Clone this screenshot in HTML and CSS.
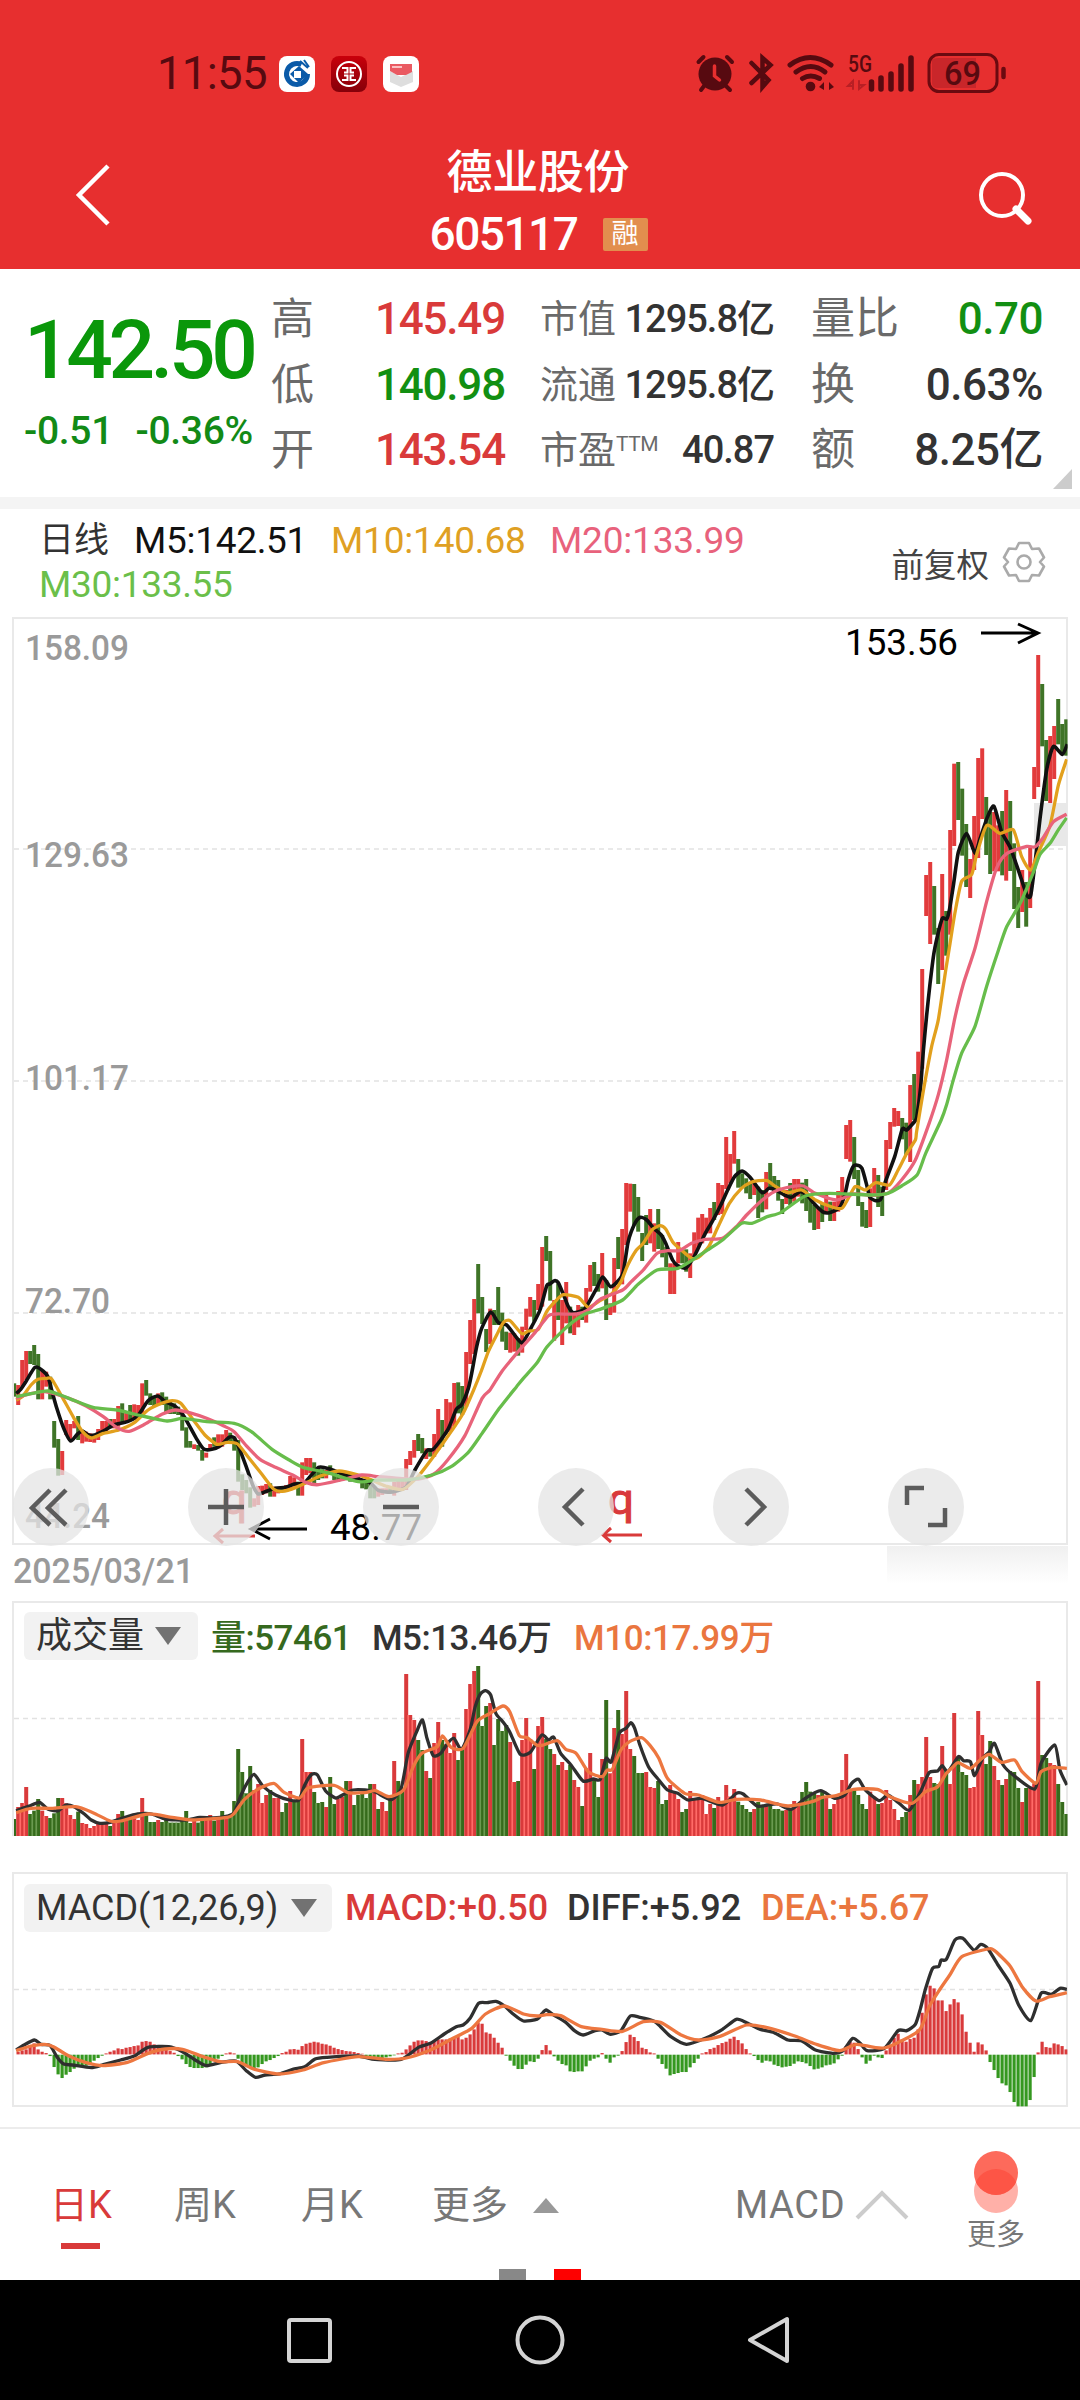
FILE: index.html
```html
<!DOCTYPE html>
<html lang="zh-CN">
<head>
<meta charset="utf-8">
<title>德业股份 605117</title>
<link rel="stylesheet" href="styles.css">
</head>
<body>
<header class="top">
  <div class="status">
    <div class="status-left">
      <span class="clock">11:55</span>
      <svg class="app" viewBox="0 0 36 36"><rect width="36" height="36" rx="8" fill="#fff"/><path d="M22.500 8.500A10.500 10.500 0 1 0 28.500 18" fill="none" stroke="#0a5aa8" stroke-width="5"/><path d="M20 10l9 8-9 9-9-9z" fill="#0a5aa8"/><path d="M15 15h7v7h-7z" fill="#fff"/><path d="M21 5l8 7M25 4l5 7" stroke="#0a5aa8" stroke-width="2"/></svg>
      <svg class="app" viewBox="0 0 36 36"><defs><linearGradient id="rg" x2="0" y2="1"><stop stop-color="#c9000b"/><stop offset="1" stop-color="#850009"/></linearGradient></defs><rect width="36" height="36" rx="8" fill="url(#rg)"/><circle cx="18" cy="18" r="12" fill="none" stroke="#fff" stroke-width="2"/><path d="M11 12h5.500v4.500H13M25 12h-5.500v4.500H23M11 24h5.500v-4.500H13M25 24h-5.500v-4.500H23" fill="none" stroke="#fff" stroke-width="2"/></svg>
      <svg class="app" viewBox="0 0 36 36"><rect width="36" height="36" rx="8" fill="#fff"/><path d="M7 15l11 6 12-6v11l-12 5-11-5z" fill="#dedede"/><path d="M7 8h22v8l-6 3h-9l-7-4z" fill="#ea5a62"/><path d="M9 11h10" stroke="#fbc1c3" stroke-width="2"/></svg>
    </div>
    <svg class="status-icons" viewBox="0 0 340 70">
      <g fill="none" stroke="#570a10" stroke-width="4" stroke-linecap="round">
        <circle cx="35" cy="34" r="16.500" fill="#570a10" stroke="none"/>
        <path d="M24 46l-3 4M46 46l4 4M18.500 22l5-5M52 22l-5-5"/>
        <path d="M34.500 26v10l5 4" stroke="#e72f2f" stroke-width="3.500"/>
        <path d="M71.500 23l17 17-6 7v-29l8 7-19 18" stroke-width="4.500"/>
        <path d="M110 25q20-15 41 0M116 32q15-11 29 0M122.500 38.500q8-5 17 0" stroke-width="5"/>
        <circle cx="130.500" cy="46.500" r="4.800" fill="#570a10" stroke="none"/>
        <path d="M144 42v8l-5-3zM149 42v8l5-3z" fill="#570a10" stroke="none"/>
        <path d="M191.500 42v7M201 38v11M211 34v15M221 26v23M231 18v31" stroke-width="5.500"/>
        <path d="M173 49v-8l-5 5h4M179 41v8l5-4h-4" stroke="#b81f24" stroke-width="2"/>
      </g>
      <path d="M252 20q2-2 6-2h38v30h-38q-6 0-6-5z" fill="#c9262a"/>
      <rect x="249" y="14.500" width="68" height="37" rx="10" fill="none" stroke="#6b0a10" stroke-width="3"/>
      <path d="M323.500 29v8" stroke="#6b0a10" stroke-width="4.500" stroke-linecap="round"/>
      <text x="168" y="31.500" class="sg" textLength="24" lengthAdjust="spacingAndGlyphs">5G</text>
      <text x="264" y="45" class="batt" textLength="37" lengthAdjust="spacingAndGlyphs">69</text>
    </svg>
  </div>
  <div class="titlebar">
    <svg class="back" viewBox="0 0 40 66"><path d="M34 4L5 33l29 29" fill="none" stroke="#fff" stroke-width="4.500"/></svg>
    <div class="title">
      <div class="name">德业股份</div>
      <div class="code"><span>605117</span><b class="badge">融</b></div>
    </div>
    <svg class="search" viewBox="0 0 56 56"><circle cx="25" cy="25" r="21" fill="none" stroke="#fff" stroke-width="4"/><path d="M39 39l12 12" stroke="#fff" stroke-width="7" stroke-linecap="round"/></svg>
  </div>
</header>

<section class="quote">
  <div class="price">
    <div class="now">142.50</div>
    <div class="chg"><span>-0.51</span><span>-0.36%</span></div>
  </div>
  <dl class="col c1"><dt>高</dt><dd class="up">145.49</dd><dt>低</dt><dd class="down">140.98</dd><dt>开</dt><dd class="up">143.54</dd></dl>
  <dl class="col c2"><dt>市值</dt><dd>1295.8亿</dd><dt>流通</dt><dd>1295.8亿</dd><dt>市盈<sup>TTM</sup></dt><dd>40.87</dd></dl>
  <dl class="col c3"><dt>量比</dt><dd class="down">0.70</dd><dt>换</dt><dd>0.63%</dd><dt>额</dt><dd>8.25亿</dd></dl>
  <i class="corner"></i>
</section>

<section class="legend">
  <div class="ma">
    <span class="l0">日线</span><span class="l1">M5:142.51</span><span class="l2">M10:140.68</span><span class="l3">M20:133.99</span><span class="l4">M30:133.55</span>
  </div>
  <div class="adj">前复权
    <svg class="gear" viewBox="-22 -22 44 44"><path d="M-5-19h10l3 6 7-.5 5 9-4 4.500 4 4.500-5 9-7-.5-3 6h-10l-3-6-7 .5-5-9 4-4.500-4-4.500 5-9 7 .5z" fill="none" stroke="#aaa" stroke-width="2.600" stroke-linejoin="round"/><circle r="6.500" fill="none" stroke="#aaa" stroke-width="2.600"/></svg>
  </div>
</section>

<section class="kline">
  <svg class="chart" id="kline" viewBox="0 610 1080 980"></svg>
  <nav class="tools">
    <button><svg viewBox="-38 -38 76 76"><path d="M-1-17L-19 1l18 17M15-17L-3 1l18 17"/></svg></button>
    <button><svg viewBox="-38 -38 76 76"><path d="M-18 0h36M0-18v36"/></svg></button>
    <button><svg viewBox="-38 -38 76 76"><path d="M-18 0h36"/></svg></button>
    <button><svg viewBox="-38 -38 76 76"><path d="M7-18L-11 0 7 18"/></svg></button>
    <button><svg viewBox="-38 -38 76 76"><path d="M-5-18L13 0-5 18"/></svg></button>
    <button><svg viewBox="-38 -38 76 76"><path d="M-2-19h-17v17M2 18h17v-17"/></svg></button>
  </nav>
</section>

<section class="panel vol">
  <div class="head">
    <span class="pick">成交量<i></i></span>
    <span class="v1">量:57461</span><span class="v2">M5:13.46万</span><span class="v3">M10:17.99万</span>
  </div>
  <svg class="chart" id="vol" viewBox="0 1590 1080 270"></svg>
</section>

<section class="panel macd">
  <div class="head">
    <span class="pick">MACD(12,26,9)<i></i></span>
    <span class="m1">MACD:+0.50</span><span class="m2">DIFF:+5.92</span><span class="m3">DEA:+5.67</span>
  </div>
  <svg class="chart" id="macd" viewBox="0 1860 1080 267"></svg>
</section>

<footer class="tabs">
  <span class="t1 on">日K</span><span class="t2">周K</span><span class="t3">月K</span><span class="t4">更多<i></i></span>
  <span class="t5">MACD<svg viewBox="0 0 54 30"><path d="M2 28L27 3l25 25" fill="none" stroke="#ccc" stroke-width="4"/></svg></span>
  <span class="t6"><svg viewBox="0 0 48 64"><clipPath id="tc"><circle cx="24" cy="22" r="22"/></clipPath><circle cx="24" cy="40" r="22" fill="#ffb0a8"/><circle cx="24" cy="22" r="22" fill="#fd6a5b"/><circle cx="24" cy="40" r="22" fill="#fd5546" clip-path="url(#tc)"/></svg>更多</span>
  <div class="pager"><i></i><i class="cur"></i></div>
</footer>
<nav class="sysnav">
  <svg viewBox="0 0 1080 120"><g fill="none" stroke="#d4d4d4" stroke-width="4" stroke-linejoin="round"><rect x="289" y="40" width="41" height="41" rx="2"/><circle cx="540" cy="60" r="22.500"/><path d="M787 39v42L750 60z"/></g></svg>
</nav>
<script src="chart.js"></script>
</body>
</html>
```
FILE: styles.css
```css
* { box-sizing: border-box; }
body { margin: 0; width: 1080px; height: 2400px; overflow: hidden; background: #fff; font-family: Roboto, "Noto Sans CJK SC", sans-serif; color: #333; }
i { font-style: normal; }
.top { height: 269px; background: #e72f2f; color: #fff; }
.status { height: 130px; padding: 40px 60px 0 157px; display: flex; justify-content: space-between; }
.status-left { display: flex; align-items: center; height: 67px; }
.clock { width: 122px; font-size: 45.500px; letter-spacing: -.7px; color: #570a10; }
.app { width: 36px; height: 36px; margin-right: 16px; }
.status-icons { width: 340px; height: 70px; }
.sg { font-size: 24px; font-weight: 500; fill: #570a10; }
.batt { font-size: 34px; font-weight: 500; fill: #570a10; }
.titlebar { display: flex; align-items: flex-start; justify-content: space-between; padding: 0 47px 0 74px; }
.back { width: 40px; height: 66px; margin-top: 32px; }
.search { width: 56px; height: 56px; margin-top: 40px; }
.title { width: 240px; }
.name { height: 78px; padding: 3px 0 0 21px; line-height: 78px; font-size: 46px; font-weight: 500; letter-spacing: -.3px; white-space: nowrap; }
.code { display: flex; align-items: center; height: 52px; padding-left: 4px; font-size: 46px; font-weight: 500; letter-spacing: -1.500px; }
.code span { width: 173px; }
.badge { width: 45px; height: 33px; border-radius: 2px; background: #e28e4e; font-size: 27px; line-height: 32px; font-weight: 400; text-align: center; letter-spacing: 0; }

.quote { position: relative; height: 240px; border-bottom: 12px solid #f4f4f4; display: flex; font-weight: 500; }
.price { width: 271px; color: #0a970a; white-space: nowrap; }
.now { height: 110px; margin-top: 26px; padding-left: 24px; line-height: 110px; font-size: 82px; letter-spacing: -4.400px; }
.chg { display: flex; justify-content: space-between; padding: 1px 18px 0 24px; height: 50px; line-height: 50px; font-size: 39px; letter-spacing: -.3px; color: #128a16; }
.col { margin: 18px 0 0; display: grid; grid-template-columns: auto auto; grid-template-rows: repeat(3, 65.500px); justify-content: space-between; line-height: 65px; white-space: nowrap; }
.col dt { font-weight: 400; color: #6a6a6a; font-size: 43px; }
.col dd { margin: 0; text-align: right; font-size: 44px; letter-spacing: -1.200px; }
.c1 { width: 234px; }
.c2 { width: 234px; margin-left: 35px; grid-template-columns: 80px auto; }
.c2 dt { font-size: 38px; }
.c2 dd { font-size: 38px; letter-spacing: -1px; }
.c2 sup { font-size: 21px; line-height: 0; vertical-align: 12px; letter-spacing: -.5px; }
.c3 { width: 232px; margin-left: 37px; }
.c3 dt { font-size: 44px; }
.c3 dd { letter-spacing: -.5px; }
.up { color: #d93a3a; }
.down { color: #128f12; }
.corner { position: absolute; right: 8px; bottom: 8px; border-left: 19px solid transparent; border-bottom: 20px solid #ccc; }

.legend { height: 101px; padding: 10px 34px 0 39px; display: flex; justify-content: space-between; }
.ma { width: 740px; display: flex; flex-wrap: wrap; align-content: flex-start; font-size: 37px; line-height: 44px; white-space: nowrap; }
.l0 { width: 95px; font-size: 35px; color: #333; }
.l1 { width: 197px; color: #111; letter-spacing: -.3px; }
.l2 { width: 219px; color: #dfa023; letter-spacing: -.2px; }
.l3 { width: 200px; color: #e8627c; letter-spacing: -.2px; }
.l4 { color: #6bbf4a; letter-spacing: -.3px; }
.adj { display: flex; align-items: center; height: 86px; font-size: 32.500px; color: #444; }
.gear { width: 44px; height: 44px; margin-left: 13px; }

.kline { position: relative; height: 980px; }
.chart { display: block; width: 1080px; height: 100%; overflow: visible; }
.chart text { font-size: 37px; }
.chart .ax { fill: #9a9a9a; font-weight: 500; font-size: 35px; }
.chart .q { font-size: 43px; }
.tools { position: absolute; left: 13px; top: 858px; display: flex; gap: 99px; }
.tools button { width: 76px; height: 78px; padding: 0; border: 0; border-radius: 50%; background: rgba(228, 228, 228, .75); }
.tools svg { display: block; width: 76px; height: 76px; }
.tools path { fill: none; stroke: #5c5c5c; stroke-width: 4.500; }

.panel { position: relative; }
.vol { height: 270px; }
.macd { height: 267px; }
.head { position: absolute; left: 24px; display: flex; align-items: center; height: 47px; font-size: 35px; font-weight: 500; white-space: nowrap; }
.vol .head { top: 22px; }
.macd .head { top: 24px; font-size: 36px; }
.pick { display: flex; align-items: center; justify-content: space-between; height: 48px; padding: 0 17px 0 12px; border-radius: 6px; background: #f2f2f2; font-weight: 400; }
.pick i { border: 13.500px solid transparent; border-top: 18px solid #727272; border-bottom: 0; }
.vol .pick { width: 174px; margin-right: 13px; font-size: 36px; line-height: 44px; }
.macd .pick { width: 308px; margin-right: 13px; padding-right: 15px; }
.v1, .v2, .v3 { margin-top: -2px; }
.v1 { width: 161px; color: #36691e; letter-spacing: -.5px; }
.v2 { width: 202px; letter-spacing: -.5px; }
.v3 { color: #ea763f; letter-spacing: -.4px; }
.m1 { width: 222px; color: #d93a3a; }
.m2 { width: 194px; }
.m3 { color: #ea763f; }

.tabs { position: relative; height: 153px; border-top: 2px solid #ececec; padding: 0 0 0 50px; display: flex; font-size: 38px; line-height: 56px; color: #777; white-space: nowrap; }
.tabs > span { margin-top: 48px; }
.t1 { width: 124px; }
.t2 { width: 127px; }
.t3 { width: 131px; }
.t4 { width: 303px; display: flex; align-items: center; height: 56px; }
.t4 i { margin-left: 25px; border: 13.500px solid transparent; border-bottom: 15px solid #999; border-top: 0; }
.t5 { width: 221px; display: flex; align-items: center; height: 56px; letter-spacing: .6px; }
.t5 svg { width: 54px; height: 30px; margin-left: 10px; }
.tabs .t6 { width: 80px; margin-top: 22px; text-align: center; font-size: 29px; line-height: 40px; }
.t6 svg { display: block; width: 48px; height: 64px; margin: 0 auto; }
.on { color: #d93a3a; }
.on::after { content: ""; display: block; width: 39px; height: 6px; margin: 10px 0 0 11px; background: #d93a3a; }
.pager { position: absolute; left: 499px; bottom: 0; display: flex; gap: 28px; }
.pager i { width: 27px; height: 11px; background: #888; }
.pager .cur { background: #fe0000; }
.sysnav { height: 120px; background: #000; }
.sysnav svg { display: block; }
```
FILE: chart.js
```js
const RED = '#e23b3c', GREEN = '#3f7427';
const barX = i => 12.2 + 4 * i;
const nums = s => s.trim().split(/[\s,]+/).map(Number);

// Coordinate frames the series are recorded in: origin and units per pixel.
const F = {
  A: [0, 1280, 2.904, 3], Z: [440, 1210, 3, 3], B: [540, 1080, 2.904, 3], C: [780, 600, 3, 2.24],
  V: [0, 1590, 2.904, 3], W: [540, 1590, 2.904, 3], M: [0, 1860, 2.904, 3], N: [540, 1860, 2.904, 3]
};

function line(color, parts, w) {
  const p = [];
  for (const [f, s] of parts) {
    const [ox, oy, sx, sy] = F[f], n = nums(s);
    for (let k = 0; k < n.length; k += 2) p.push([ox + n[k] / sx, oy + n[k + 1] / sy]);
  }
  let d = `M${p[0]}`;
  for (let k = 0; k < p.length - 1; k++) {
    const a = p[k - 1] || p[k], b = p[k], c = p[k + 1], e = p[k + 2] || c, t = 9;
    d += `C${b[0] + (c[0] - a[0]) / t},${b[1] + (c[1] - a[1]) / t} ${c[0] - (e[0] - b[0]) / t},${c[1] - (e[1] - b[1]) / t} ${c}`;
  }
  return `<path d="${d}" fill="none" stroke="${color}" stroke-width="${w || 3.3}" stroke-linejoin="round"/>`;
}
const rect = (x, y, w, h, c) => `<rect x="${x}" y="${y}" width="${w}" height="${h}" fill="${c}"/>`;
const grid = y => `<path d="M14 ${y}H1066" stroke="#e2e2e2" stroke-width="1.500" stroke-dasharray="5 4"/>`;
const label = (x, y, t, w, c) => `<text x="${x}" y="${y}" class="${c || ''}" textLength="${w}" lengthAdjust="spacingAndGlyphs">${t}</text>`;

const candles = `g310,350 r315,375 r240,320 r213,300 g213,252 g195,255 g222,358 r270,358 r275,320 g290,358
g423,503 g477,587 r513,585 r420,465 r432,478 r423,445 g408,480 r450,490 r455,485 r460,486
r462,488 r447,480 r423,462 r423,455 g417,445 r417,445 r378,440 g370,430 r395,425 g375,420
r373,420 r375,415 r310,400 g300,347 g340,375 g350,378 r340,375 g337,375 g350,400 g365,402
g370,402 g380,405 g390,452 g442,503 g483,503 r493,507 g495,512 g510,542 r518,533 r492,510
g472,500 r463,505 r463,500 r450,490 g458,490 g470,512 g480,605 g583,630 g600,640 g622,683
r655,680 r618,675 r617,645 r612,640 g610,650 r620,650 r622,640 g618,632 r615,635 r588,632
r592,620 g605,647 r547,647 r534,585 r534,580 g547,610 g562,600 g568,595 r570,595 g556,580
g570,600 g585,605 r580,600 r578,597 g580,605 r585,603 g585,605 g598,625 g600,628 g612,655
g620,655 r625,650 r625,645 r625,640 g625,640 r605,647 r600,630 r600,632 r537,630 r513,555
r480,533 g462,513 g474,520 r505,537 g505,530 r462,530 r387,510 g420,500 r357,460 r367,455
r309,440 g307,400 g318,405 r216,380 r120,252 r57,222 g-48,100 g51,132 g147,216 r86,192
g90,135 g21,135 g98,185 g155,210 r158,218 r160,215 g175,227 r140,218 r86,150 r51,110
g60,125 r12,90 r-99,80 g-132,-57 g-87,62 r60,182 g10,120 r60,195 r6,130 g80,160
r95,165 r75,142 g80,120 r24,128 r-45,35 g-54,18 g-18,35 r-81,25 g0,120 r70,105
r-66,98 g-129,-33 r-153,13 r-291,-105 r-289,-205 g-288,-165 g-249,-145 g-141,-57 g-195,-105 r-213,-110
r-170,-85 g-213,-93 g-135,-68 g-100,-38 r-50,42 r-50,42 r-114,-50 g-92,-50 g-92,-25 r-80,-6
r-143,-70 r-187,-95 r-198,-110 r-187,-140 r-216,-140 g-234,-180 r-291,-195 r-285,-198 r-429,-273 r-378,-290
r-447,-349 g-363,-277 g-320,-278 g-305,-260 g-290,-243 r-290,-255 g-280,-186 g-270,-203 r-324,-212 g-351,-270
g-312,-265 g-300,-238 g-243,-198 r-270,-228 g-291,-225 r-303,-235 r-303,-250 g-292,-230 g-303,-207 g-255,-172
g-225,-150 r-220,-153 g-230,-174 r-255,-200 g-235,-177 r-235,-177 r-267,-205 r-309,-220 r-465,-363 r-480,-355
g-429,-303 g-330,-222 g-234,-160 g-210,-156 r-275,-159 r-336,-250 g-315,-219 g-280,-192 r-420,-270 r-474,-393
r-516,-460 r-507,-462 g-486,-422 g-472,-375 r-585,-354 g-618,-480 r-685,-500 r-933,-634 r-1215,-1092 r-1254,-1008
g-1182,-1036 g-1056,-888 r-1218,-930 g-1107,-973 r-1350,-1036 r-1549,-1302 g-1554,-1380 g-1474,-1273 g-1368,-1179 r-1263,-1146
r-1392,-1230 r-1566,-1266 r-1595,-1383 g-1449,-1275 g-1404,-1218 r-1404,-1226 r-1364,-1226 g-1407,-1214 r-1470,-1198 g-1437,-1227
g-1310,-1113 g-1179,-1056 r-1230,-1104 g-1194,-1060 r-1301,-1116 r-1539,-1443 r-1875,-1479 g-1788,-1601 g-1620,-1437 r-1632,-1431
r-1662,-1503 g-1743,-1607 g-1668,-1583 g-1682,-1573`.split(/\s+/);

let k = '<clipPath id="cp"><path d="M14 610H1067.500V2200H14z"/></clipPath>';
k += '<defs><linearGradient id="sh" x2="0" y2="1"><stop stop-color="#f0f0f0"/><stop offset="1" stop-color="#fff"/></linearGradient></defs>';
k += '<rect x="13" y="618" width="1054" height="926" fill="none" stroke="#e9e9e9" stroke-width="2"/>' + grid(849) + grid(1081) + grid(1313);
k += rect(1034, 803, 33, 43, '#e8e8e8') + rect(887, 1546, 181, 38, 'url(#sh)');
k += label(25, 660, '158.09', 104, 'ax') + label(25, 867, '129.63', 104, 'ax') + label(25, 1090, '101.17', 104, 'ax') +
  label(25, 1313, '72.70', 85, 'ax') + label(25, 1528, '44.24', 85, 'ax') + label(13, 1583, '2025/03/21', 181, 'ax');
k += '<g clip-path="url(#cp)">';
candles.forEach((c, i) => {
  const [a, b] = nums(c.slice(1));
  k += rect(barX(i), 1280 + a / 3, 4, (b - a) / 3, c[0] === 'r' ? RED : GREEN);
});
k += line('#111', [
  ['A', '47,340 60,328 75,305 102,262 125,273 140,292 150,330 165,385 185,445 205,483 225,462 240,453 255,464 270,466 300,453 330,435 370,425 400,408 430,362 458,348 480,365 510,380 535,410 570,475 592,507 615,508 640,497 665,472 680,473 695,505 715,560 735,618 750,642 770,635 800,625 830,622 855,612 885,608 925,562 960,568 1000,585 1040,597 1075,608 1100,632 1140,636 1180,620 1205,570 1240,512 1258,508 1300,450 1325,388 1340,375'],
  ['Z', '85,535 95,490 110,410 125,355 152,306 175,338 200,345 230,383 248,398 275,350 300,300 320,228 330,222 343,212 355,218 372,258 385,290 400,308 430,300 445,280 470,235 488,201'],
  ['B', '205,620 232,597 242,575 255,490 265,455 280,422 292,412 310,420 330,445 352,465 365,490 385,540 400,557 425,563 450,525 480,460 500,425 525,375 545,330 565,290 587,273 610,292 645,338 665,325 685,330 710,345 730,352 755,335 775,345 795,370 820,395 840,398 870,383 885,345 895,300 908,262 918,255 935,265 950,320 958,352 975,362 990,357 1003,305 1030,230 1052,148 1065,150 1090,122'],
  ['C', '411,1155 422,1090 430,1010 440,930 450,860 462,790 478,735 488,712 500,715 508,695 520,640 535,565 560,523 585,567 600,535 622,487 642,462 665,520 690,553 715,605 740,660 752,662 765,590 780,490 800,380 820,328 847,346 862,323']], 3.6);
k += line('#e2a01d', [
  ['A', '47,360 65,350 90,315 110,298 135,295 150,297 180,350 215,415 240,455 265,474 300,460 345,450 390,428 430,390 470,370 500,362 525,370 560,418 595,465 630,493 660,487 690,492 720,530 760,582 795,628 820,634 860,622 900,603 930,588 985,573 1040,585 1080,600 1120,618 1170,628 1215,588 1260,528 1310,455 1345,400'],
  ['Z', '103,535 125,480 145,425 170,375 190,338 210,332 245,371 265,363 295,358 320,305 345,275 370,254 415,262 445,292 480,272'],
  ['B', '210,640 235,605 255,555 280,510 300,490 325,450 348,437 365,447 385,485 410,510 440,535 460,532 490,500 515,445 550,370 585,325 610,308 635,302 660,302 685,320 720,338 760,330 800,360 840,378 878,384 915,320 945,330 975,308 1015,315 1040,270 1065,220 1090,180'],
  ['C', '410,1190 430,1100 455,1000 475,940 497,830 510,770 525,700 545,630 575,615 590,570 620,505 660,523 700,515 725,575 752,605 775,565 810,505 835,415 860,357']]);
k += line('#e8637a', [
  ['A', '47,355 80,343 130,335 200,355 250,378 300,410 340,443 375,454 420,433 470,403 510,390 550,398 600,415 650,438 680,455 715,497 755,538 800,562 850,585 890,608 925,614 990,600 1050,585 1100,590 1160,595 1215,597 1260,582 1300,540 1350,467 1400,355'],
  ['Z', '150,540 185,485 230,430 285,368 325,317 350,312 410,312 445,300 480,268'],
  ['B', '240,630 265,605 300,570 340,520 370,512 405,512 440,490 480,478 530,475 570,440 600,405 640,365 680,335 730,320 765,318 800,340 860,360 910,342 960,345 1010,340 1050,300 1090,240 1130,130'],
  ['C', '475,1108 500,1030 525,935 550,860 585,780 620,675 650,600 680,568 740,552 765,553 790,532 820,497 860,480']]);
k += line('#67bd4b', [
  ['A', '47,350 95,340 140,333 200,355 270,382 340,390 400,405 485,423 530,415 600,425 680,430 730,455 790,508 840,540 880,562 950,578 1040,605 1100,600 1180,600 1255,585 1310,560 1360,517 1400,460 1450,385 1500,320'],
  ['Z', '250,505 290,460 320,412 360,370 400,335 440,310 480,298'],
  ['B', '240,660 285,613 340,570 400,565 450,535 490,508 530,480 585,430 615,430 660,410 700,397 770,348 840,340 960,345 1010,340 1050,318 1095,285 1120,220 1165,120'],
  ['C', '500,1130 520,1075 545,1015 585,955 620,865 655,785 680,732 720,680 760,610 780,570 810,545 835,515 860,488']]);
k += '</g><g fill="none" stroke="#000" stroke-width="3"><path d="M981 633h55M1018 624l20 9-20 10"/><path d="M307 1529h-55M270 1519l-19 10 19 10"/></g>';
k += label(845, 655, '153.56', 113) + label(330, 1540, '48.77', 92);
k += '<g fill="none" stroke="#d93a3a" stroke-width="3"><path d="M255 1536h-40M223 1529l-8 7 8 7M642 1535h-39M611 1528l-8 7 8 7"/></g>';
k += '<g fill="#d93a3a" stroke="#d93a3a">' + label(222, 1514, 'q', 25, 'q') + label(608, 1514, 'q', 26, 'q') + '</g>';
document.getElementById('kline').innerHTML = k;

const volume = `g687 r651 r639 r591 g672 g662 g627 r662 r678 g684 g670 g624 r624 r640 r675 r687 g665 r699 r702 r714 r708 r700 r702 r702 g708 r690 r672 g663 r685 g675
r685 r690 r624 g675 g696 g696 r690 g696 g690 g698 g698 g698 g690 g663 g699 r690 g698 g685 r680 r675 g692 r678 g663 r680 g675 g633 g477 g546 g610 g528
r600 r582 r639 r615 g600 r624 r624 g666 g639 r603 g630 g627 r447 r546 r546 g606 g639 g636 r651 g561 g642 r627 r620 g573 r573 g645 g615 g612 g624 g582
r582 g657 r636 r663 g630 r513 g573 g595 r252 r375 r390 g450 g480 r543 g564 r459 r396 g450 r462 r489 r429 g510 g475 r357 r282 r243 g228 g408 g348 r339
g465 g387 g423 g405 r456 r576 g573 r450 r384 r447 g537 r408 r381 g447 g477 r492 g525 r516 r540 g525 r570 r591 g648 r535 r489 g570 g621 r507 g330 r550
r414 g360 r432 r303 r477 g498 g549 g549 r546 r591 r594 g573 g642 g630 r585 r605 r627 g666 g657 r603 r630 r625 r615 r672 r642 g654 r621 r635 r585 r620
r597 g635 g645 g657 g666 r657 g636 g650 r645 g640 g657 g657 g662 r660 g657 r633 r645 g606 g576 g605 g610 r615 g605 r620 g657 r642 r625 r570 r492 r600
g594 g615 g642 g657 r605 r620 g642 r639 r600 r630 r657 r690 g681 g666 r615 g570 r582 r561 r441 r561 g579 g582 r468 g540 r582 r369 g500 g546 g555 r594
r591 r363 r435 g522 g453 r528 r570 g585 r567 g543 g546 g594 r636 g594 r590 r580 r273 g495 g504 r519 r525 g582 g636 g672`.split(/\s+/);
let v = '<path d="M13 1836V1602H1067V1836" fill="none" stroke="#e9e9e9" stroke-width="2"/>' + grid(1718.5) + '<g clip-path="url(#cp)">';
volume.forEach((c, i) => {
  const t = +c.slice(1), x = barX(i);
  v += rect(x, 1590 + t / 3, 4, (738 - t) / 3, c[0] === 'r' ? '#d93a3b' : '#366b1c');
  const p = volume[i - 1];
  if (p && p[0] === c[0]) {
    const m = Math.max(t, +p.slice(1));
    v += rect(x - .8, 1590 + m / 3, 1.7, (738 - m) / 3, c[0] === 'r' ? '#ff6b68' : '#6a9a50');
  }
});
v += line('#2f2f2f', [
  ['V', '47,663 65,655 85,648 115,637 140,658 170,662 190,645 215,650 245,672 265,690 290,700 320,697 360,683 400,672 440,672 480,687 540,690 580,682 620,684 660,678 680,668 700,615 720,575 738,553 765,590 800,615 840,630 868,630 885,585 905,553 922,555 945,602 975,624 1000,612 1025,600 1060,600 1090,606 1135,629 1165,595 1185,490 1210,425 1227,390 1240,445 1258,497 1280,490 1300,460 1318,445 1340,478 1365,420 1380,350 1395,312 1410,302 1425,315 1440,370 1460,395 1480,425 1510,492 1540,487'],
  ['W', '5,435 25,450 40,442 60,490 90,525 125,573 155,567 175,568 192,505 207,515 230,430 250,415 264,398 275,415 290,465 315,530 345,570 370,600 400,610 430,630 470,625 530,645 570,610 590,612 630,648 660,645 690,642 730,658 770,625 815,602 855,625 885,615 905,580 925,568 945,600 985,632 1010,615 1040,637 1072,661 1105,605 1130,548 1155,543 1168,527 1185,545 1215,500 1230,512 1250,515 1262,557 1285,505 1305,485 1320,460 1345,525 1380,560 1437,597 1455,520 1495,465 1510,540 1530,585']]);
v += line('#ed7740', [
  ['V', '47,668 90,655 150,655 220,650 270,668 320,693 350,693 430,672 500,682 560,690 660,682 680,670 710,628 750,597 795,580 825,607 870,624 895,594 970,586 1010,608 1060,608 1090,602 1130,620 1172,600 1200,530 1225,490 1270,470 1285,438 1310,472 1345,475 1385,395 1420,372 1460,348 1480,365 1508,437 1530,442 1560,466'],
  ['W', '10,465 50,452 75,478 105,490 140,545 180,560 195,540 210,538 235,480 260,455 295,443 320,467 345,505 370,565 420,610 460,615 520,637 570,628 640,630 720,648 790,635 820,622 860,617 910,598 980,598 1020,622 1080,640 1120,605 1155,590 1180,550 1200,530 1215,518 1250,535 1280,508 1305,493 1340,517 1378,510 1400,545 1440,580 1455,545 1490,532 1530,535']]);
document.getElementById('vol').innerHTML = v + '</g>';

const hist = nums(`0 8 12 15 28 33 15 8 4 -4 -37 -59 -70 -60 -52 -42 -35 -33 -33 -30 -18 -10 -3 3 8 12 18 16 20 22
25 27 38 40 38 30 25 20 15 10 5 -4 -14 -28 -37 -40 -40 -40 -38 -28 -18 -12 -4 3 6 3 -12 -25 -35 -38
-45 -38 -28 -20 -16 -10 -4 4 8 15 16 14 25 32 35 38 36 32 30 26 20 16 13 10 9 7 4 2 -4 -8
-12 -15 -12 -8 -5 -2 3 5 15 27 38 42 42 40 36 40 45 45 45 48 48 52 45 50 60 75 95 92 66 62
50 35 20 -3 -18 -33 -43 -43 -30 -20 -22 -12 13 28 12 -5 -18 -28 -32 -50 -52 -50 -50 -35 -18 -12 -8 4 -12 -24
-8 -3 10 37 59 52 40 20 16 6 3 -12 -28 -42 -62 -58 -55 -52 -52 -38 -25 -12 3 7 16 20 28 34 38 47
53 43 33 16 3 -4 -16 -24 -18 -20 -30 -34 -38 -36 -34 -27 -20 -22 -26 -34 -44 -42 -38 -32 -30 -26 -14 -3 25 38
35 16 -8 -27 -18 -3 -8 -10 12 25 50 62 45 38 46 50 75 125 180 206 198 162 162 130 150 166 156 120 68 35
8 36 30 12 -22 -46 -70 -86 -92 -112 -142 -155 -155 -155 -136 -67 6 38 22 20 33 30 25 15`);
let m = '<rect x="13" y="1873" width="1054" height="233" fill="none" stroke="#e9e9e9" stroke-width="2"/>' + grid(1989.5) + '<g clip-path="url(#cp)">';
hist.forEach((h, i) => {
  m += rect(barX(i) + .3, h > 0 ? 2054.4 - h / 3 : 2054.7, 3.2, Math.abs(h) / 3, h > 0 ? '#d93a3b' : '#34981f');
});
m += line('#2f2f2f', [
  ['M', '47,570 70,555 100,540 120,553 145,556 165,590 185,612 210,615 265,623 300,614 350,600 390,588 430,562 490,560 530,575 570,602 600,617 640,608 685,603 715,632 742,652 770,645 810,642 850,628 885,620 915,597 950,592 1040,588 1080,597 1165,598 1215,562 1250,550 1290,522 1325,500 1345,495 1365,475 1390,430 1415,428 1440,424 1465,438 1490,462 1520,483 1560,478'],
  ['N', '5,462 18,450 40,465 75,487 100,512 125,525 160,512 180,510 205,523 235,512 262,468 290,472 330,483 350,500 380,530 425,553 480,535 530,508 570,478 600,488 640,508 680,518 720,540 760,543 800,570 850,580 880,572 908,535 930,550 950,572 1000,565 1040,512 1065,512 1090,493 1105,445 1120,385 1140,325 1158,320 1165,300 1180,298 1205,240 1228,235 1260,270 1280,253 1300,265 1330,315 1365,370 1390,435 1425,482 1455,400 1485,403 1510,385 1530,388']]);
m += line('#ed7740', [
  ['M', '47,572 90,558 130,553 155,560 200,588 250,608 300,617 370,607 430,580 480,567 530,568 590,590 640,605 690,605 740,628 810,642 880,630 940,608 1040,590 1120,598 1180,594 1250,570 1310,538 1370,505 1410,462 1465,438 1520,462 1560,468'],
  ['N', '20,464 60,467 120,500 180,508 240,514 300,485 350,487 410,525 460,540 520,530 600,495 660,503 740,528 800,552 870,572 920,553 1000,564 1100,512 1130,440 1160,390 1190,345 1225,290 1300,267 1320,272 1365,318 1400,380 1440,423 1480,410 1530,398']]);
document.getElementById('macd').innerHTML = m + '</g>';
```
